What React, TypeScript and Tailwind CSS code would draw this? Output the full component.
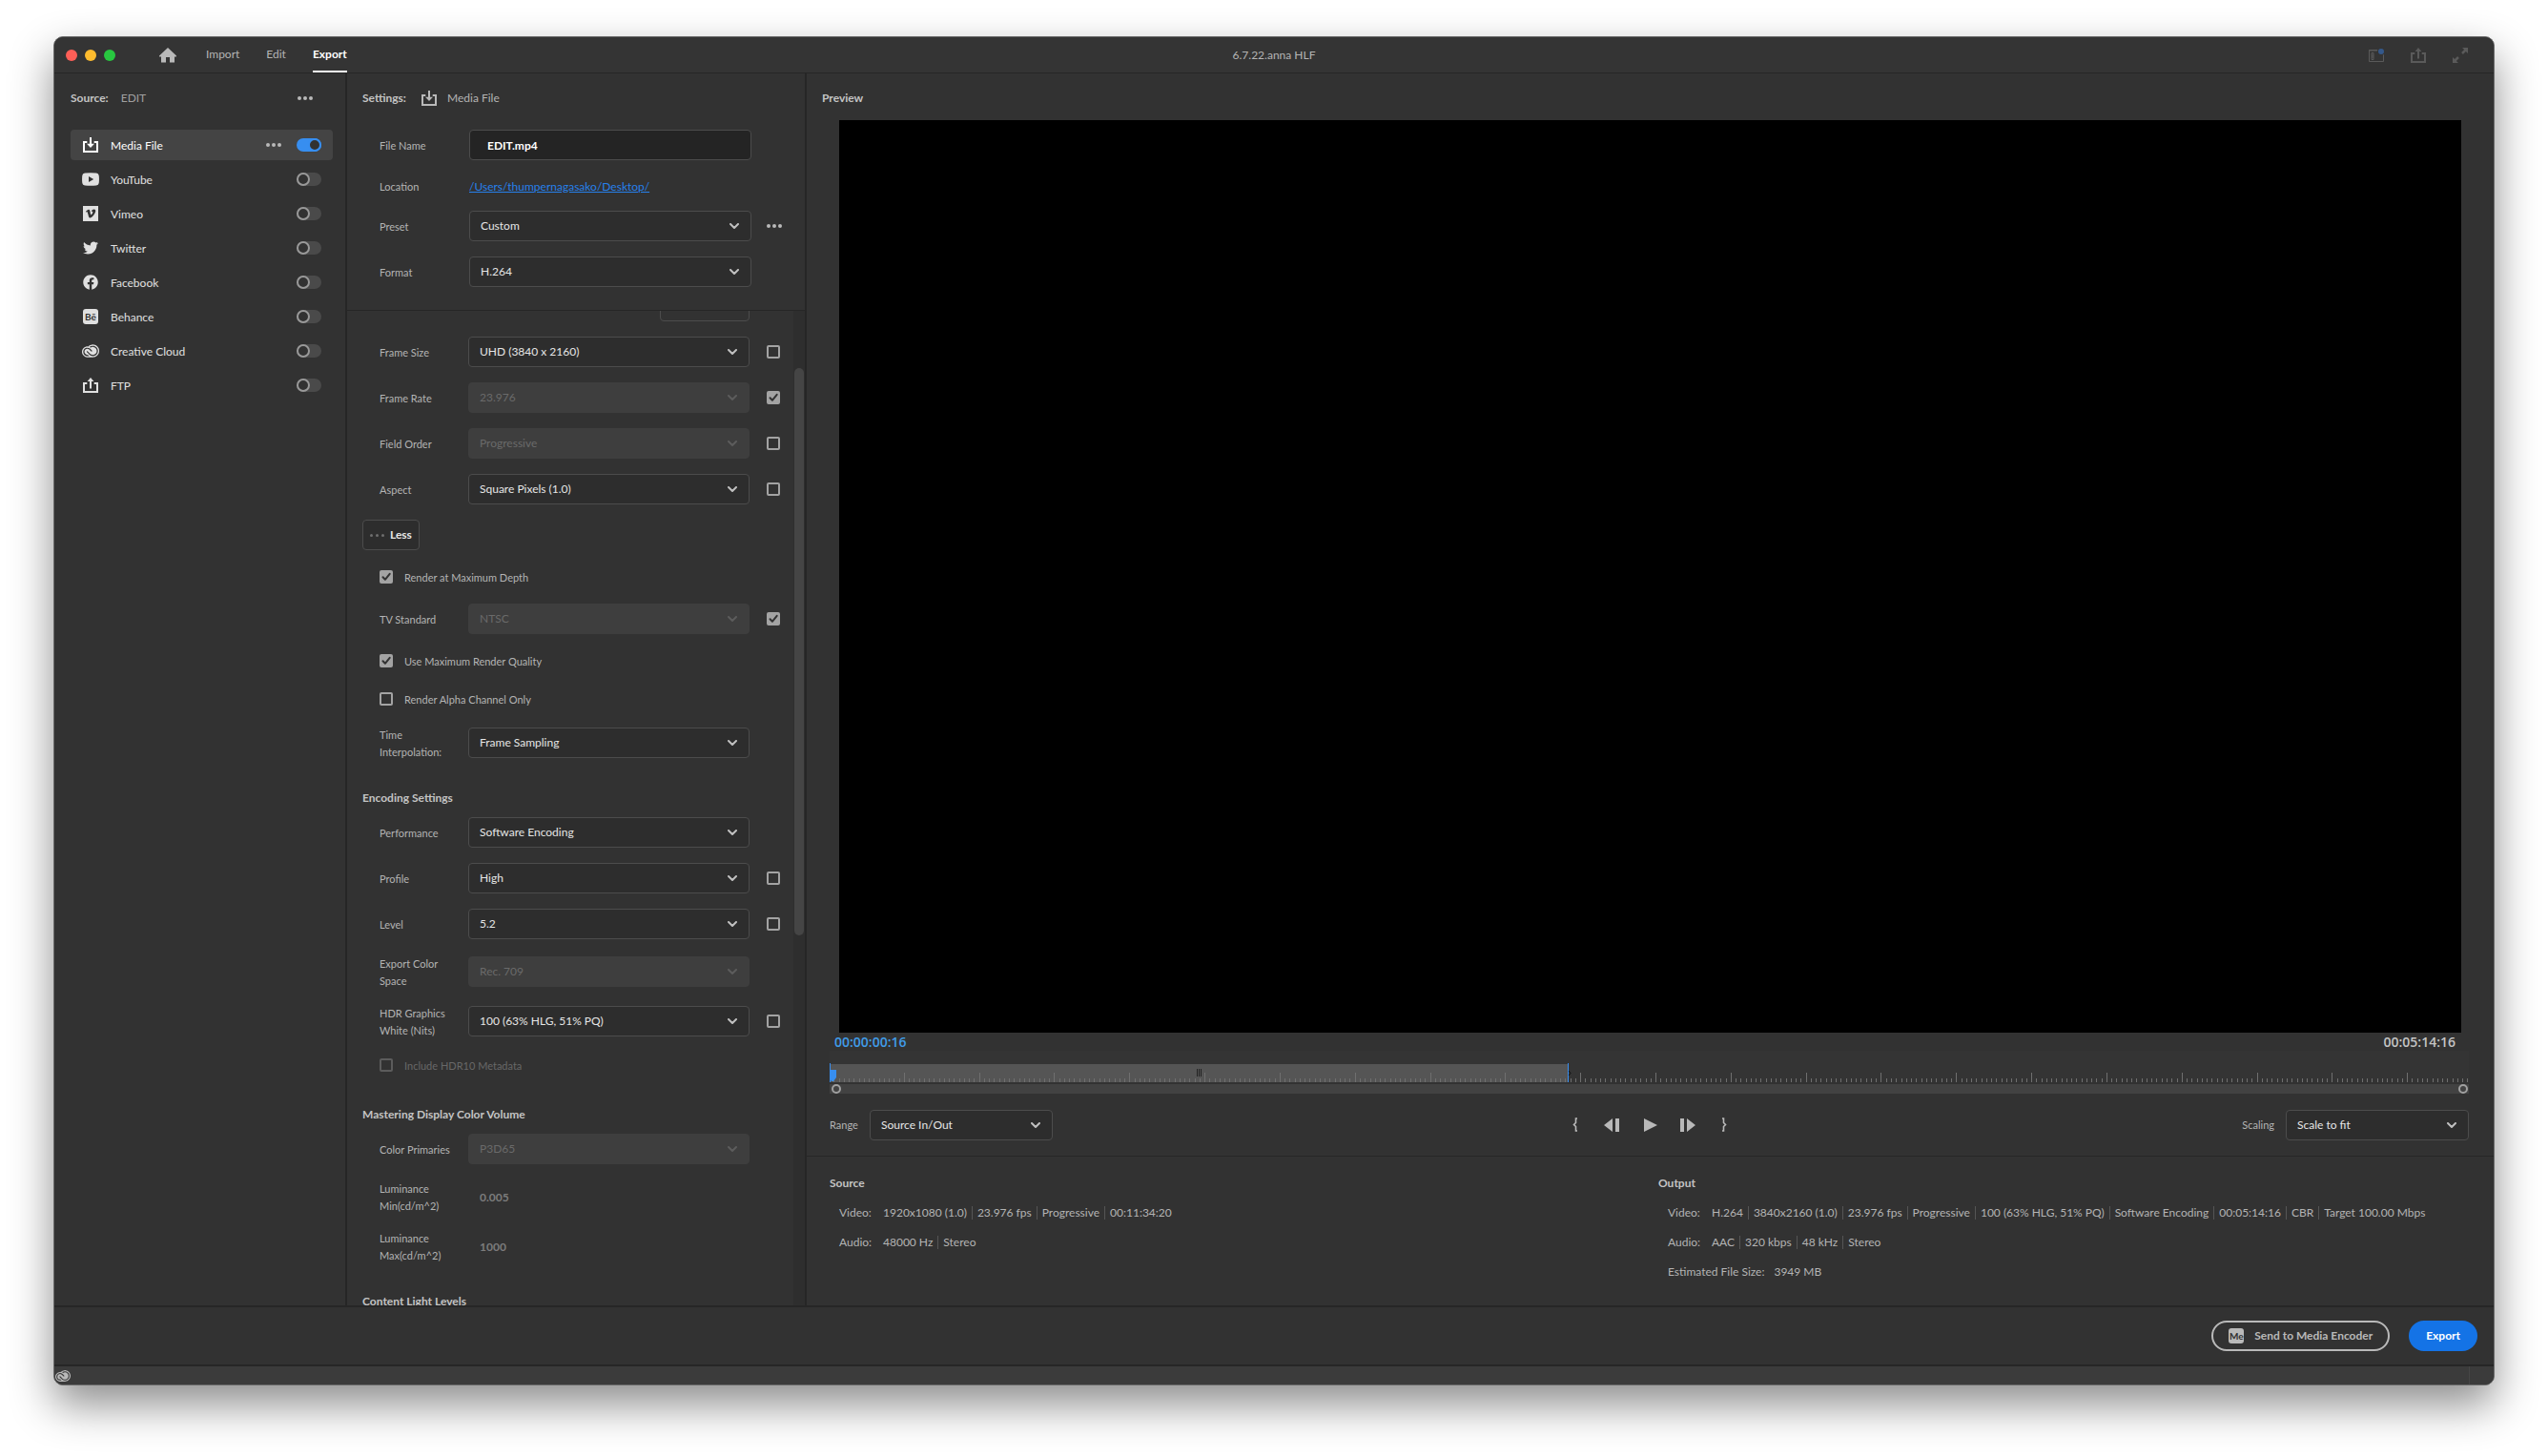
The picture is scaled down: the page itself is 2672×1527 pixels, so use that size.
import { useState } from "react"
import type { ReactNode } from "react"
import { FaFacebook, FaTwitter, FaVimeoV } from "react-icons/fa"
import { SiAdobecreativecloud } from "react-icons/si"

const ImportIcon = ({ className = "" }: { className?: string }) => (
  <svg viewBox="0 0 16 16" className={`size-4 ${className}`} fill="none" aria-hidden="true">
    <path d="M4.300 5H1v10h14V5h-3.300" stroke="currentColor" strokeWidth="2" />
    <path d="M8 0v8" stroke="currentColor" strokeWidth="2" />
    <path d="M4 6.800h8L8 11z" fill="currentColor" />
  </svg>
)

const ShareIcon = ({ className = "" }: { className?: string }) => (
  <svg viewBox="0 0 16 16" className={`size-4 ${className}`} fill="none" aria-hidden="true">
    <path d="M4.300 6H1v9h14V6h-3.300" stroke="currentColor" strokeWidth="2" />
    <path d="M8 3v8.500" stroke="currentColor" strokeWidth="2" />
    <path d="M4.600 4h6.800L8 0z" fill="currentColor" />
  </svg>
)

const YouTubeIcon = () => (
  <svg viewBox="0 0 18 14" className="h-[14px] w-[18px]" fill="currentColor" aria-hidden="true">
    <path fillRule="evenodd" d="M3 .6Q9 0 15 .6 17.4.8 17.7 3q.5 4 0 8-.3 2.200-2.700 2.400-6 .6-12 0Q.6 13.200.3 11q-.5-4 0-8Q.6.8 3 .6zM7 3.900v6.200L12.200 7z" />
  </svg>
)

const VimeoIcon = () => (
  <span className="flex size-4 items-center justify-center bg-current">
    <FaVimeoV className="size-3 text-[#323232]" />
  </span>
)

const LetterIcon = ({ children }: { children: ReactNode }) => (
  <span className="flex size-4 items-center justify-center rounded-[3px] bg-current">
    <span className="text-[10px] leading-none font-bold text-[#323232]">{children}</span>
  </span>
)

const HomeIcon = () => (
  <svg viewBox="0 0 18 16" className="h-4 w-[18px]" fill="currentColor" aria-hidden="true">
    <path d="M9 0l9 8.600q.3.900-.6.900H16V15.500h-5V10H7v5.500H2V9.500H.6Q-.3 9.500 0 8.600z" />
  </svg>
)

const Chevron = ({ className }: { className: string }) => (
  <svg viewBox="0 0 10 7" className={`pointer-events-none absolute top-1/2 right-[13px] -mt-[3px] h-[7px] w-[10px] ${className}`} fill="none" aria-hidden="true">
    <path d="M1 1l4 4 4-4" stroke="currentColor" strokeWidth="2" strokeLinecap="round" strokeLinejoin="round" />
  </svg>
)

const Dots = ({ label }: { label: string }) => (
  <button type="button" aria-label={label} className="flex gap-[2px]">
    <span className="size-1 rounded-full bg-[#b9b9b9]" />
    <span className="size-1 rounded-full bg-[#b9b9b9]" />
    <span className="size-1 rounded-full bg-[#b9b9b9]" />
  </button>
)

function Toggle({ label, initial = false }: { label: string; initial?: boolean }) {
  const [on, setOn] = useState(initial)
  return (
    <button
      type="button"
      role="switch"
      aria-checked={on}
      aria-label={label}
      onClick={() => setOn(!on)}
      className={`flex h-[14px] w-[26px] rounded-full ${on ? "justify-end bg-[#378ef0]" : "bg-[#4a4a4a]"}`}
    >
      <span className={`size-[14px] rounded-full border-2 bg-[#323232] ${on ? "border-[#378ef0]" : "border-[#999999]"}`} />
    </button>
  )
}

function Check({ id, label, checked = false, disabled = false }: { id?: string; label?: string; checked?: boolean; disabled?: boolean }) {
  const [on, setOn] = useState(checked)
  return (
    <span className="relative flex size-[14px] shrink-0">
      <input
        id={id}
        type="checkbox"
        aria-label={label}
        checked={on}
        disabled={disabled}
        onChange={() => setOn(!on)}
        className="size-[14px] appearance-none rounded-[2px] border-2 border-[#a3a3a3] checked:bg-[#a3a3a3] disabled:border-[#5c5c5c]"
      />
      {on && (
        <svg viewBox="0 0 14 14" className="pointer-events-none absolute inset-0 size-[14px]" fill="none" aria-hidden="true">
          <path d="M3.500 7.300l2.400 2.500 4.800-6" stroke="#323232" strokeWidth="2" strokeLinecap="round" strokeLinejoin="round" />
        </svg>
      )}
    </span>
  )
}

function Select({ id, value, disabled = false }: { id: string; value: string; disabled?: boolean }) {
  return (
    <span className="relative block h-8 w-full">
      <select
        id={id}
        disabled={disabled}
        defaultValue={value}
        className="h-8 w-full appearance-none rounded-[4px] border border-[#4c4c4c] bg-[#2d2d2d] px-[11px] text-[#e6e6e6] opacity-100 disabled:border-[#3e3e3e] disabled:bg-[#3e3e3e] disabled:text-[#6a6a6a]"
      >
        <option>{value}</option>
      </select>
      <Chevron className={disabled ? "text-[#5c5c5c]" : "text-[#c0c0c0]"} />
    </span>
  )
}

type FieldProps = {
  id: string
  label: string
  value: string
  disabled?: boolean
  tall?: boolean
  match?: "on" | "off"
}

function Field({ id, label, value, disabled, tall, match }: FieldProps) {
  return (
    <div className={`flex items-center ${tall ? "h-9" : "h-8"}`}>
      <label htmlFor={id} className="w-[93px] pt-0.5 pr-3 text-[11px] leading-[18px]">{label}</label>
      <div className="w-[295px]">
        <Select id={id} value={value} disabled={disabled} />
      </div>
      {match && (
        <div className="ml-[18px]">
          <Check label={`Match source: ${label}`} checked={match === "on"} />
        </div>
      )}
    </div>
  )
}

function CheckRow({ id, label, checked, disabled }: { id: string; label: string; checked?: boolean; disabled?: boolean }) {
  return (
    <div className="flex h-6 items-center gap-3">
      <Check id={id} checked={checked} disabled={disabled} />
      <label htmlFor={id} className={`pt-0.5 text-[11px] ${disabled ? "text-[#686868]" : ""}`}>{label}</label>
    </div>
  )
}

function Luminance({ id, label, value }: { id: string; label: string; value: string }) {
  return (
    <div className="flex h-9 items-center">
      <label htmlFor={id} className="w-[105px] pt-0.5 pr-5 text-[11px] leading-[18px]">{label}</label>
      <input id={id} disabled defaultValue={value} className="w-24 pt-0.5 font-bold text-[#7c7c7c]" />
    </div>
  )
}

const destinations: { name: string; icon: ReactNode; on?: boolean }[] = [
  { name: "Media File", icon: <ImportIcon />, on: true },
  { name: "YouTube", icon: <YouTubeIcon /> },
  { name: "Vimeo", icon: <VimeoIcon /> },
  { name: "Twitter", icon: <FaTwitter className="size-4" /> },
  { name: "Facebook", icon: <FaFacebook className="size-4" /> },
  { name: "Behance", icon: <LetterIcon>Bē</LetterIcon> },
  { name: "Creative Cloud", icon: <SiAdobecreativecloud className="size-[18px]" /> },
  { name: "FTP", icon: <ShareIcon /> },
]

function TitleBar() {
  return (
    <header className="flex h-[38px] shrink-0 border-b border-[#262626] bg-[#343434] px-3">
      <div className="flex flex-1 items-center">
        <div className="flex gap-2">
          <span className="size-3 rounded-full bg-[#ff5f57]" />
          <span className="size-3 rounded-full bg-[#febc2e]" />
          <span className="size-3 rounded-full bg-[#28c840]" />
        </div>
        <button type="button" aria-label="Home" className="ml-[46px] text-[#b9b9b9]">
          <HomeIcon />
        </button>
        <nav className="ml-[31px] flex h-full gap-7">
          <button type="button" className="pb-px">Import</button>
          <button type="button" className="pb-px">Edit</button>
          <button type="button" className="border-b-2 border-white pt-px font-bold text-white">Export</button>
        </nav>
      </div>
      <h1 className="flex items-center">6.7.22.anna HLF</h1>
      <div className="flex flex-1 items-center justify-end text-[#5a5a5a]">
        <div className="mr-[15px] flex gap-7">
          <button type="button" aria-label="Workspaces">
            <svg viewBox="0 0 16 16" className="size-4" fill="none" aria-hidden="true">
              <path d="M.5 2.500h15v12H.5zM0 3h9" stroke="currentColor" />
              <path d="M3 5.500h2v7H3zM3 8h2M3 10h2" stroke="currentColor" />
              <circle cx="13" cy="4" r="4" fill="#343434" />
              <circle cx="13" cy="4" r="3" fill="#34588a" />
            </svg>
          </button>
          <button type="button" aria-label="Quick export">
            <ShareIcon />
          </button>
          <button type="button" aria-label="Full screen">
            <svg viewBox="0 0 16 16" className="size-4" fill="currentColor" aria-hidden="true">
              <path d="M10 0h6v6l-2.100-2.100-3 3-1.800-1.800 3-3zM6 16H0v-6l2.100 2.100 3-3 1.800 1.800-3 3z" />
            </svg>
          </button>
        </div>
      </div>
    </header>
  )
}

function SourcePanel() {
  return (
    <aside className="w-[307px] shrink-0 border-r-2 border-[#262626] pl-[17px] pr-[13px]">
      <div className="mb-2 flex h-[51px] items-center justify-between pr-[21px]">
        <p className="flex gap-[13px]">
          <b className="text-[#c4c4c4]">Source:</b> <span className="text-[#a0a0a0]">EDIT</span>
        </p>
        <Dots label="Source options" />
      </div>
      <ul className="flex flex-col gap-1">
        {destinations.map(({ name, icon, on }) => (
          <li
            key={name}
            className={`flex h-8 items-center rounded-[4px] pr-3 pl-3 ${on ? "bg-[#444444] text-white" : "text-[#e0e0e0]"}`}
          >
            <span className="flex w-[18px] justify-center">{icon}</span>
            <span className="ml-3 flex-1 pt-0.5">{name}</span>
            {on && <Dots label={`${name} options`} />}
            <span className="ml-4 flex">
              <Toggle label={name} initial={on} />
            </span>
          </li>
        ))}
      </ul>
    </aside>
  )
}

function SettingsPanel() {
  return (
    <section className="flex w-[482px] shrink-0 flex-col border-r-2 border-[#262626]">
      <div className="border-b border-[#262626] pb-6 pl-[34px]">
        <div className="mb-2 -ml-[18px] flex h-[51px] items-center">
          <b className="w-[62px] text-[#c4c4c4]">Settings:</b>
          <ImportIcon className="text-[#b9b9b9]" />
          <span className="ml-[11px]">Media File</span>
        </div>
        <div className="flex flex-col gap-4">
          <div className="flex h-8 items-center">
            <label htmlFor="file-name" className="w-[94px] pt-0.5 text-[11px]">File Name</label>
            <input
              id="file-name"
              defaultValue="EDIT.mp4"
              className="h-8 w-[296px] rounded-[4px] border border-[#4c4c4c] bg-[#242424] px-[18px] font-bold text-white"
            />
          </div>
          <div className="flex h-[21px] items-center pt-0.5">
            <span className="w-[94px] pt-0.5 text-[11px]">Location</span>
            <a href="#location" className="text-[#2680eb] underline">/Users/thumpernagasako/Desktop/</a>
          </div>
          <div className="flex h-8 items-center">
            <label htmlFor="preset" className="w-[94px] pt-0.5 text-[11px]">Preset</label>
            <div className="mr-4 w-[296px]">
              <Select id="preset" value="Custom" />
            </div>
            <Dots label="Preset options" />
          </div>
          <div className="flex h-8 items-center">
            <label htmlFor="format" className="w-[94px] pt-0.5 text-[11px]">Format</label>
            <div className="w-[296px]">
              <Select id="format" value="H.264" />
            </div>
          </div>
        </div>
      </div>

      <div className="flex min-h-0 flex-1">
        <div className="flex flex-1 flex-col gap-4 overflow-hidden pl-[34px]">
          {/* scrolled partly out of view */}
          <div className="-mt-[21px] flex h-8 w-[388px] shrink-0 justify-end">
            <button type="button" className="h-8 w-[94px] rounded-[4px] border border-[#4c4c4c] text-[#8a8a8a]">Match Source</button>
          </div>
          <Field id="frame-size" label="Frame Size" value="UHD (3840 x 2160)" match="off" />
          <Field id="frame-rate" label="Frame Rate" value="23.976" disabled match="on" />
          <Field id="field-order" label="Field Order" value="Progressive" disabled match="off" />
          <Field id="aspect" label="Aspect" value="Square Pixels (1.0)" match="off" />
          <button type="button" className="-ml-[18px] flex h-8 items-center gap-[6px] self-start rounded-[4px] border border-[#4c4c4c] bg-[#2d2d2d] px-[7px] font-bold text-[#e6e6e6]">
            <span className="flex gap-[3px]">
              <span className="size-[3px] rounded-full bg-[#6e6e6e]" />
              <span className="size-[3px] rounded-full bg-[#6e6e6e]" />
              <span className="size-[3px] rounded-full bg-[#6e6e6e]" />
            </span>
            Less
          </button>
          <CheckRow id="max-depth" label="Render at Maximum Depth" checked />
          <Field id="tv-standard" label="TV Standard" value="NTSC" disabled match="on" />
          <CheckRow id="max-quality" label="Use Maximum Render Quality" checked />
          <CheckRow id="alpha-only" label="Render Alpha Channel Only" />
          <Field id="interpolation" label="Time Interpolation:" value="Frame Sampling" tall />

          <h2 className="mt-3 -mb-2 -ml-[18px] leading-6 font-bold text-[#c4c4c4]">Encoding Settings</h2>
          <Field id="performance" label="Performance" value="Software Encoding" />
          <Field id="profile" label="Profile" value="High" match="off" />
          <Field id="level" label="Level" value="5.2" match="off" />
          <Field id="color-space" label="Export Color Space" value="Rec. 709" disabled tall />
          <Field id="hdr-white" label="HDR Graphics White (Nits)" value="100 (63% HLG, 51% PQ)" tall match="off" />
          <CheckRow id="hdr10" label="Include HDR10 Metadata" disabled />

          <h2 className="mt-3 -mb-2 -ml-[18px] leading-6 font-bold text-[#c4c4c4]">Mastering Display Color Volume</h2>
          <Field id="primaries" label="Color Primaries" value="P3D65" disabled />
          <Luminance id="lum-min" label="Luminance Min(cd/m^2)" value="0.005" />
          <Luminance id="lum-max" label="Luminance Max(cd/m^2)" value="1000" />

          <h2 className="mt-3 -mb-2 -ml-[18px] leading-6 font-bold text-[#c4c4c4]">Content Light Levels</h2>
        </div>
        <div className="w-3 bg-[#2e2e2e] px-px pt-[60px]">
          <div className="h-[calc(60%+5px)] rounded-full bg-[#454545]" />
        </div>
      </div>
    </section>
  )
}

const TICK = 5.2547
const ticks = Array.from({ length: 800 }, (_, i) => i + 1)

function Timeline() {
  return (
    <div>
      <div className="relative h-[33px] overflow-hidden bg-[#343434]">
        <div className="absolute bottom-0 left-px flex h-[19px] w-[45%] items-center justify-center gap-px bg-[#555555]">
          <span className="h-2 w-px bg-[#222222]" />
          <span className="h-2 w-px bg-[#222222]" />
          <span className="h-2 w-px bg-[#222222]" />
        </div>
        <svg className="absolute inset-x-0 bottom-0 h-5 w-full" aria-hidden="true">
          {ticks.map((i) => (
            <rect
              key={i}
              x={Math.round(i * TICK - 1)}
              y={i % 15 === 0 ? 10 : 16}
              width="1"
              height={i % 15 === 0 ? 10 : 4}
              fill="#6f6f6f"
            />
          ))}
          <rect x="0" y="0" width="1" height="20" fill="#378ef0" />
          <path d="M0 7h7v8l-3 4H2l-2-3z" fill="#378ef0" />
        </svg>
        <svg viewBox="0 0 4 20" className="absolute bottom-0 left-[45%] h-5 w-1" aria-hidden="true">
          <rect width="1" height="20" fill="#378ef0" />
          <path d="M1 8l2 2.500L1 13" stroke="#111111" fill="none" />
        </svg>
      </div>
      <div className="mt-[2px] flex h-[10px] justify-between bg-[#424242] pr-px pl-0.5">
        <span className="size-[10px] rounded-full border-2 border-[#a0a0a0]" />
        <span className="size-[10px] rounded-full border-2 border-[#a0a0a0]" />
      </div>
    </div>
  )
}

function Transport() {
  return (
    <div className="flex items-center text-[#b9b9b9]">
      <button type="button" aria-label="Set in point" className="w-5">
        <svg viewBox="0 0 20 15" className="h-[15px] w-5" fill="none" aria-hidden="true">
          <path d="M12 1h-1.500v4.500L8.500 7.500l2 2V14H12" stroke="currentColor" strokeWidth="1.600" />
        </svg>
      </button>
      <button type="button" aria-label="Step back" className="ml-5">
        <svg viewBox="0 0 16 14" className="h-[14px] w-4" fill="currentColor" aria-hidden="true">
          <path d="M9 0v14L0 7zM12 0h4v14h-4z" />
        </svg>
      </button>
      <button type="button" aria-label="Play" className="ml-[26px]">
        <svg viewBox="0 0 14 14" className="size-[14px]" fill="currentColor" aria-hidden="true">
          <path d="M0 0l14 7-14 7z" />
        </svg>
      </button>
      <button type="button" aria-label="Step forward" className="ml-6">
        <svg viewBox="0 0 16 14" className="h-[14px] w-4" fill="currentColor" aria-hidden="true">
          <path d="M0 0h4v14H0zM7 0l9 7-9 7z" />
        </svg>
      </button>
      <button type="button" aria-label="Set out point" className="ml-5 w-5">
        <svg viewBox="0 0 20 15" className="h-[15px] w-5" fill="none" aria-hidden="true">
          <path d="M8 1h1.500v4.500l2 2-2 2V14H8" stroke="currentColor" strokeWidth="1.600" />
        </svg>
      </button>
    </div>
  )
}

function InfoRow({ label, values }: { label: string; values: string[] }) {
  return (
    <div className="flex h-[31px] items-center">
      <dt className="min-w-[36px]">{label}</dt>
      <dd className="ml-[10px] flex items-center gap-[5px]">
        {values.map((value, i) => (
          <span key={value} className="flex items-center gap-[5px]">
            {i > 0 && <span className="h-[14px] w-px bg-[#555555]" />}
            {value}
          </span>
        ))}
      </dd>
    </div>
  )
}

function PreviewPanel() {
  return (
    <main className="flex min-w-0 flex-1 flex-col">
      <h2 className="flex h-[49px] shrink-0 items-center pt-0.5 pl-4 font-bold text-[#c4c4c4]">Preview</h2>
      <div className="pr-[34px] pl-[34px]">
        <div className="aspect-video bg-black" />
      </div>
      <div className="pr-[26px] pl-6">
        <div className="flex h-[19px] items-center justify-between pt-0.5 pr-[14px] pl-[5px] font-['Open_Sans',sans-serif] text-sm leading-4 font-semibold text-[#c4c4c4]">
          <span className="text-[#409ce8]">00:00:00:16</span>
          <span>00:05:14:16</span>
        </div>
        <Timeline />
        <div className="flex items-center pt-[17px] pb-4">
          <div className="flex flex-1 items-center">
            <label htmlFor="range" className="w-[42px] pt-0.5 text-[11px]">Range</label>
            <div className="w-48">
              <Select id="range" value="Source In/Out" />
            </div>
          </div>
          <Transport />
          <div className="flex flex-1 items-center justify-end gap-3">
            <label htmlFor="scaling" className="pt-0.5 text-[11px]">Scaling</label>
            <div className="w-48">
              <Select id="scaling" value="Scale to fit" />
            </div>
          </div>
        </div>
      </div>
      <div className="grid flex-1 grid-cols-2 content-start border-t border-[#262626] pt-[19px] pr-[7px] pl-6">
        <section>
          <h3 className="leading-[18px] font-bold text-[#c4c4c4]">Source</h3>
          <dl className="pt-[7px] pl-[10px]">
            <InfoRow label="Video:" values={["1920x1080 (1.0)", "23.976 fps", "Progressive", "00:11:34:20"]} />
            <InfoRow label="Audio:" values={["48000 Hz", "Stereo"]} />
          </dl>
        </section>
        <section>
          <h3 className="leading-[18px] font-bold text-[#c4c4c4]">Output</h3>
          <dl className="pt-[7px] pl-[10px]">
            <InfoRow
              label="Video:"
              values={["H.264", "3840x2160 (1.0)", "23.976 fps", "Progressive", "100 (63% HLG, 51% PQ)", "Software Encoding", "00:05:14:16", "CBR", "Target 100.00 Mbps"]}
            />
            <InfoRow label="Audio:" values={["AAC", "320 kbps", "48 kHz", "Stereo"]} />
            <InfoRow label="Estimated File Size:" values={["3949 MB"]} />
          </dl>
        </section>
      </div>
    </main>
  )
}

export default function App() {
  return (
    <div className="flex h-screen bg-white px-14 pt-[38px] pb-[74px] font-[Lato,sans-serif] text-xs text-[#b4b4b4]">
      <div className="flex min-w-0 flex-1 flex-col overflow-hidden rounded-[10px] border border-[#6a6a6a] bg-[#323232] shadow-[0_20px_45px_rgba(0,0,0,0.45)]">
        <TitleBar />
        <div className="flex min-h-0 flex-1">
          <SourcePanel />
          <SettingsPanel />
          <PreviewPanel />
        </div>
        <div className="flex shrink-0 items-center justify-end gap-5 border-y-2 border-[#262626] py-[14px] pr-[17px] font-bold">
          <button type="button" className="flex h-8 items-center gap-[11px] rounded-full border-2 border-[#b9b9b9] px-4 text-[#b9b9b9]">
            <LetterIcon>Me</LetterIcon>
            Send to Media Encoder
          </button>
          <button type="button" className="h-8 rounded-full bg-[#1473e6] px-[18px] text-white">Export</button>
        </div>
        <footer className="flex h-[19px] shrink-0 items-center justify-between bg-[#3b3b3b] pr-[25px] pl-px">
          <SiAdobecreativecloud className="size-4 text-[#b9b9b9]" />
          <span className="h-full w-px bg-[#464646]" />
        </footer>
      </div>
    </div>
  )
}
